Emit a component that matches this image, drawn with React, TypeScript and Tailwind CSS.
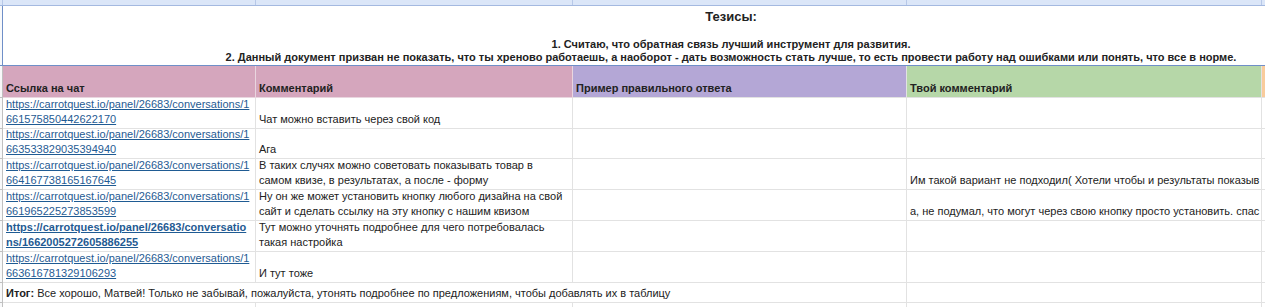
import { clsx as cn } from 'clsx'

const FONT = "font-['Liberation_Sans',Arial,sans-serif]"
const GRID = 'grid grid-cols-[3px_253px_317px_334px_355px_1fr]'

type Row = {
  h: string
  link: string[]
  bold?: boolean
  comment?: string[]
  mine?: string
}

const ROWS: Row[] = [
  {
    h: 'h-[31px]',
    link: ['https://carrotquest.io/panel/26683/conversations/1', '661575850442622170'],
    comment: ['Чат можно вставить через свой код'],
  },
  {
    h: 'h-[30px]',
    link: ['https://carrotquest.io/panel/26683/conversations/1', '663533829035394940'],
    comment: ['Ага'],
  },
  {
    h: 'h-[31px]',
    link: ['https://carrotquest.io/panel/26683/conversations/1', '664167738165167645'],
    comment: ['В таких случях можно советовать показывать товар в', 'самом квизе, в результатах, а после - форму'],
    mine: 'Им такой вариант не подходил( Хотели чтобы и результаты показыв',
  },
  {
    h: 'h-[31px]',
    link: ['https://carrotquest.io/panel/26683/conversations/1', '661965225273853599'],
    comment: ['Ну он же может установить кнопку любого дизайна на свой', 'сайт и сделать ссылку на эту кнопку с нашим квизом'],
    mine: 'а, не подумал, что могут через свою кнопку просто установить. спас',
  },
  {
    h: 'h-[31px]',
    bold: true,
    link: ['https://carrotquest.io/panel/26683/conversatio', 'ns/1662005272605886255'],
    comment: ['Тут можно уточнять подробнее для чего потребовалась', 'такая настройка'],
  },
  {
    h: 'h-[31px]',
    link: ['https://carrotquest.io/panel/26683/conversations/1', '663616781329106293'],
    comment: ['И тут тоже'],
  },
]

const cell = 'flex flex-col justify-end overflow-hidden whitespace-nowrap border-r border-b border-[#e2e2e2] px-[3px] pb-[1px] leading-[15px]'

function Gutter({ className }: { className?: string }) {
  return <div className={cn('border-r border-b border-[#c0c0c0] bg-[#f8f9fa]', className)} />
}

export default function App() {
  return (
    <div className={cn('h-[307px] w-[1265px] overflow-hidden bg-white text-[11px] text-[#222]', FONT)}>
      {/* frozen top strip */}
      <div className={cn(GRID, 'h-[6px] border-b border-[#a4b9e0] bg-[#dbe6f8]')}>
        <div className="border-r border-[#b7c8e8]" />
        <div className="border-r border-[#b7c8e8]" />
        <div className="border-r border-[#b7c8e8]" />
        <div className="border-r border-[#b7c8e8]" />
        <div className="border-r border-[#b7c8e8]" />
        <div />
      </div>

      {/* theses block */}
      <div className="flex h-[60px]">
        <div className="w-[3px] border-r border-b border-[#6f8fc8] bg-[#f8f9fa]" />
        <div className="flex flex-1 flex-col items-center justify-between border-b border-[#6f8fc8] pb-[1px] pl-[194px] text-center font-bold">
          <p className="pt-[3px] text-[13px] leading-[16px]">Тезисы:</p>
          <div className="leading-[13px]">
            <p>1. Считаю, что обратная связь лучший инструмент для развития.</p>
            <p className="whitespace-nowrap">
              2. Данный документ призван не показать, что ты хреново работаешь, а наоборот - дать возможность стать лучше, то есть провести работу над ошибками или понять, что все в норме.
            </p>
          </div>
        </div>
      </div>

      {/* header */}
      <div className={cn(GRID, 'h-[32px] font-bold')}>
        <Gutter />
        <div className={cn(cell, 'border-[#e9d6df] bg-[#d5a6bd]')}>Ссылка на чат</div>
        <div className={cn(cell, 'border-[#e9d6df] bg-[#d5a6bd]')}>Комментарий</div>
        <div className={cn(cell, 'border-[#d9d3eb] bg-[#b4a7d6]')}>Пример правильного ответа</div>
        <div className={cn(cell, 'border-[#dbebd3] bg-[#b6d7a8]')}>Твой комментарий</div>
        <div className={cn(cell, 'bg-[#f9cb9c]')} />
      </div>

      {ROWS.map((r, i) => (
        <div key={i} className={cn(GRID, r.h)}>
          <Gutter />
          <div className={cn(cell, 'px-[2px]')}>
            {r.link.map((l) => (
              <a
                key={l}
                href="#"
                className={cn('text-[#1f5b93] underline underline-offset-[1px]', r.bold && 'font-bold')}
              >
                {l}
              </a>
            ))}
          </div>
          <div className={cell}>
            {r.comment?.map((c) => (
              <span key={c}>{c}</span>
            ))}
          </div>
          <div className={cell} />
          <div className={cn(cell, 'px-[2px]')}>{r.mine}</div>
          <div className={cell} />
        </div>
      ))}

      {/* summary row */}
      <div className="grid h-[20px] grid-cols-[3px_904px_355px_1fr]">
        <Gutter />
        <div className={cn(cell, 'pb-[1px]')}>
          <p>
            <b>Итог:</b> Все хорошо, Матвей! Только не забывай, пожалуйста, утонять подробнее по предложениям, чтобы добавлять их в таблицу
          </p>
        </div>
        <div className={cell} />
        <div className={cell} />
      </div>
      <div className={cn(GRID, 'h-[20px]')}>
        <Gutter />
        <div className={cell} />
        <div className={cell} />
        <div className={cell} />
        <div className={cell} />
        <div className={cell} />
      </div>
    </div>
  )
}
